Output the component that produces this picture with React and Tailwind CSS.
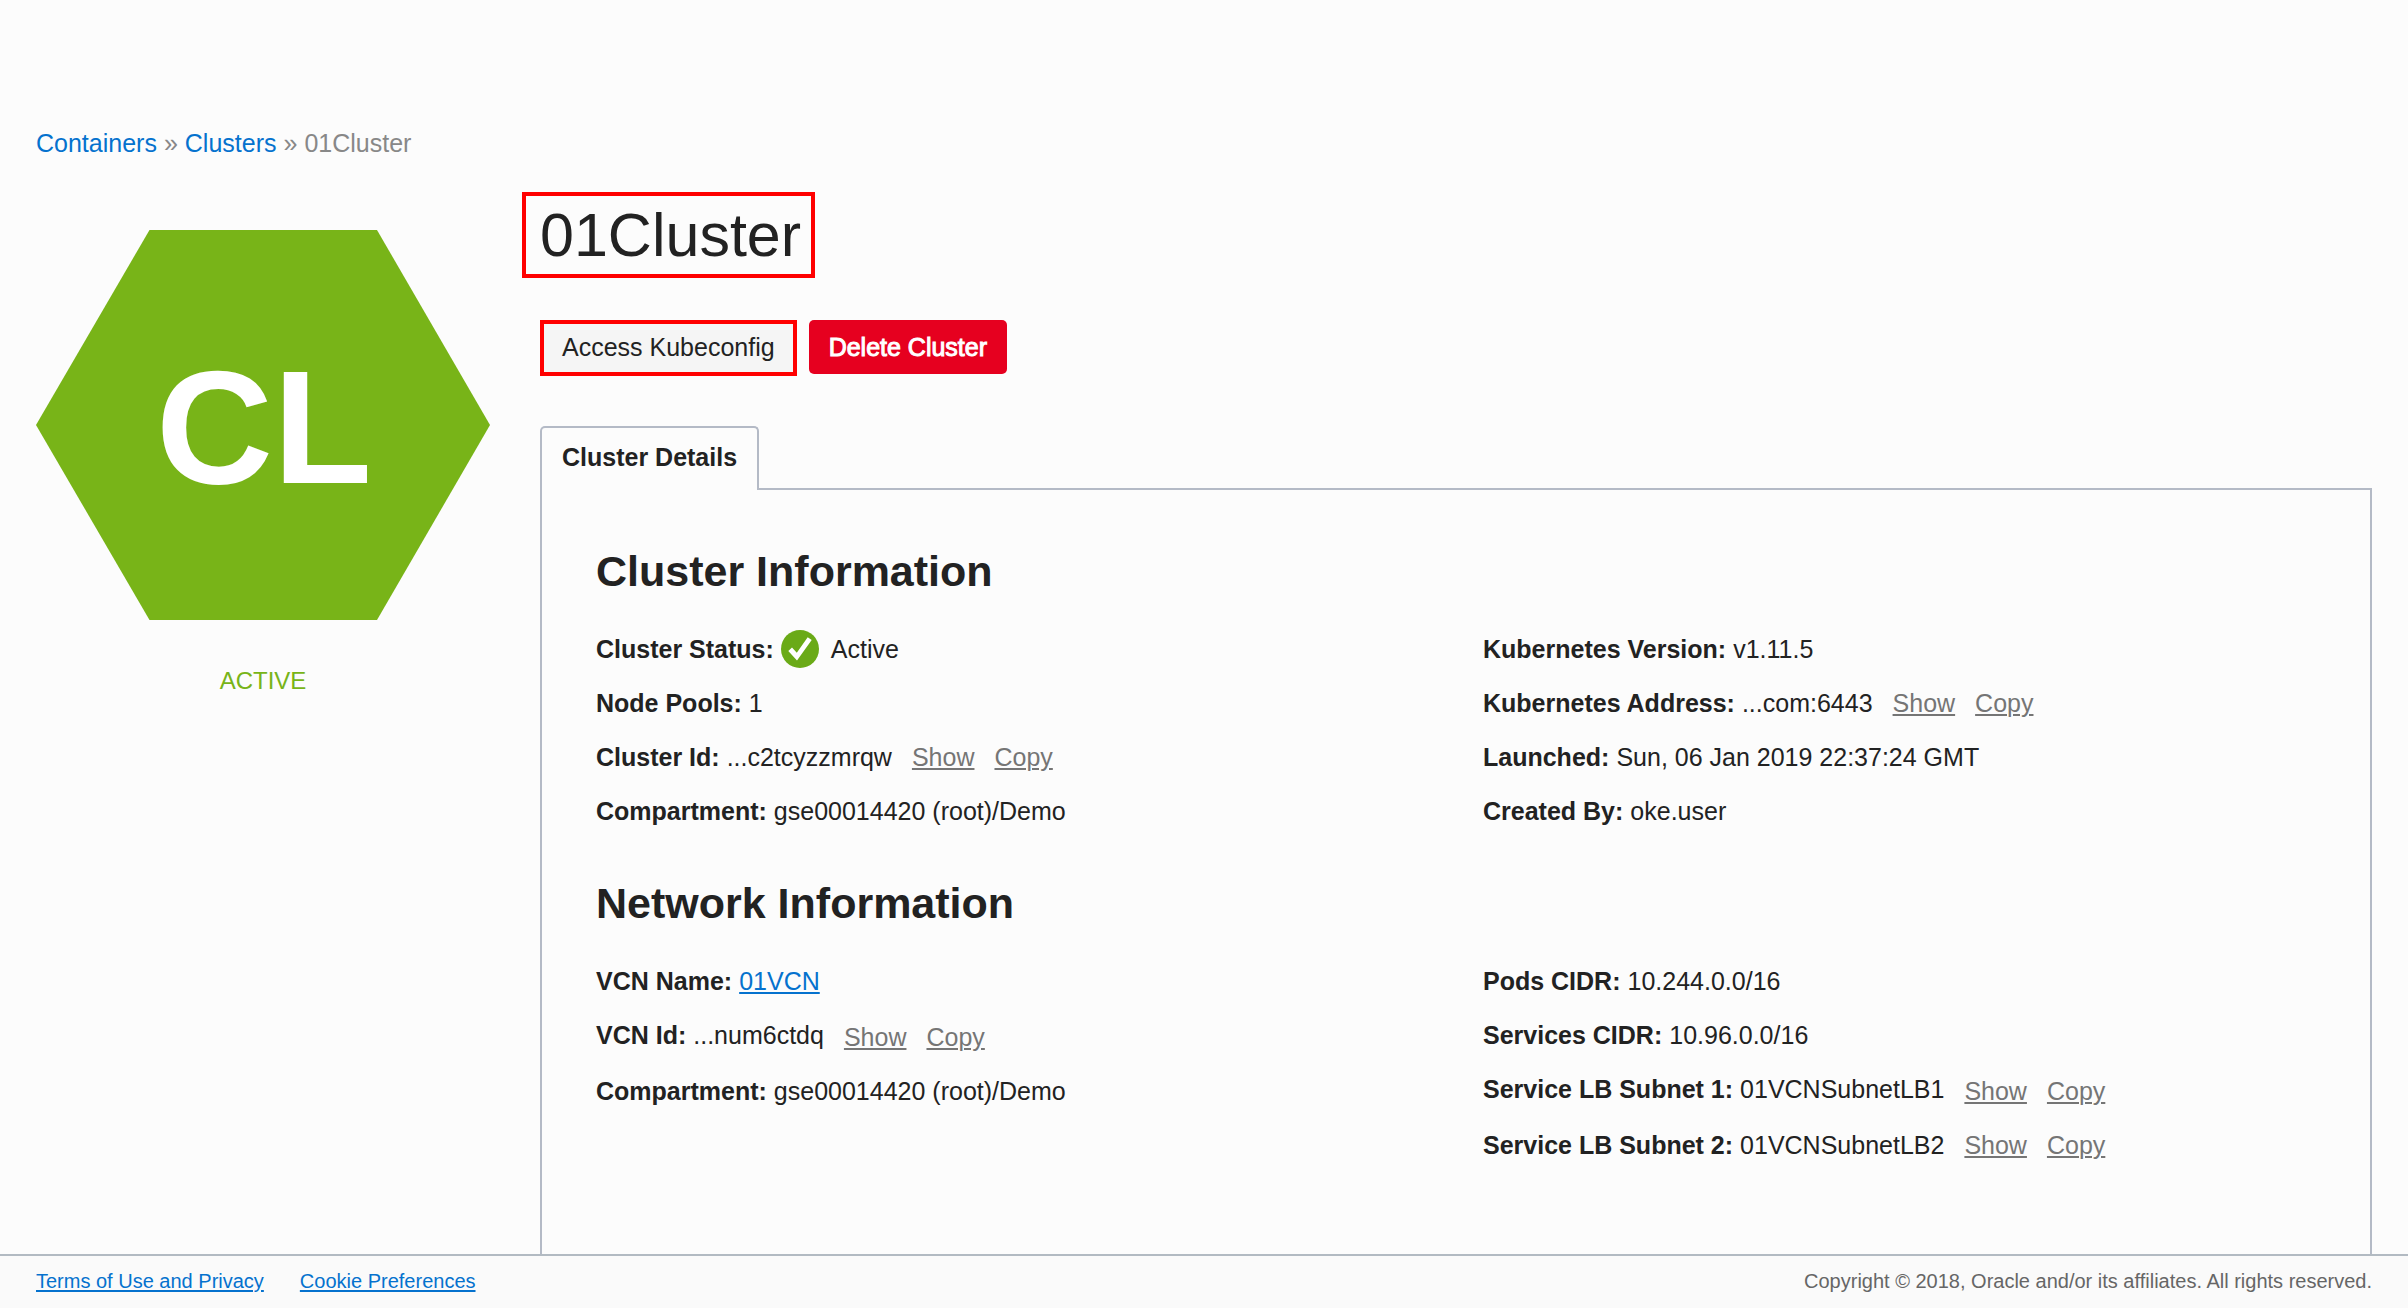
import React from "react";

const clusterLeft = [
  { label: "Cluster Status", value: "Active", status: true },
  { label: "Node Pools", value: "1" },
  { label: "Cluster Id", value: "...c2tcyzzmrqw", actions: true },
  { label: "Compartment", value: "gse00014420 (root)/Demo" },
];

const clusterRight = [
  { label: "Kubernetes Version", value: "v1.11.5" },
  { label: "Kubernetes Address", value: "...com:6443", actions: true },
  { label: "Launched", value: "Sun, 06 Jan 2019 22:37:24 GMT" },
  { label: "Created By", value: "oke.user" },
];

const networkLeft = [
  { label: "VCN Name", value: "01VCN", link: true },
  { label: "VCN Id", value: "...num6ctdq", actions: true, tall: true },
  { label: "Compartment", value: "gse00014420 (root)/Demo" },
];

const networkRight = [
  { label: "Pods CIDR", value: "10.244.0.0/16" },
  { label: "Services CIDR", value: "10.96.0.0/16" },
  { label: "Service LB Subnet 1", value: "01VCNSubnetLB1", actions: true, tall: true },
  { label: "Service LB Subnet 2", value: "01VCNSubnetLB2", actions: true },
];

function CheckIcon() {
  return (
    <svg viewBox="0 0 38 38" className="mr-[5px] size-[38px] shrink-0" aria-hidden="true">
      <circle cx="19" cy="19" r="19" fill="#6aaa17" />
      <polygon points="7.3,21 11,17.5 15.8,22.8 26.7,7.3 30.7,10 16,30.5" fill="#fff" />
    </svg>
  );
}

function Field({ label, value, status, link, actions, tall }) {
  return (
    <div className={tall ? "flex h-14 leading-[54px]" : "flex leading-[54px]"}>
      <dt className="mr-[7px] font-bold">{label}:</dt>
      <dd className="flex">
        {status ? (
          <span className="flex items-center gap-[7px]">
            <CheckIcon />
            {value}
          </span>
        ) : link ? (
          <a href="#vcn" className="text-[#0572ce] underline decoration-2 underline-offset-2">{value}</a>
        ) : (
          <span>{value}</span>
        )}
        {actions && (
          <span className="ml-5 flex gap-5 self-end text-[#757575]">
            <a href="#show" className="underline decoration-2 underline-offset-2">Show</a>
            <a href="#copy" className="underline decoration-2 underline-offset-2">Copy</a>
          </span>
        )}
      </dd>
    </div>
  );
}

function Section({ title, left, right }) {
  return (
    <section>
      <h2 className="mb-6 text-[43px] leading-[54px] font-bold">{title}</h2>
      <div className="grid grid-cols-2 gap-[54px]">
        <dl>{left.map((f) => <Field key={f.label} {...f} />)}</dl>
        <dl>{right.map((f) => <Field key={f.label} {...f} />)}</dl>
      </div>
    </section>
  );
}

export default function App() {
  return (
    <div className="flex min-h-screen flex-col bg-[#fcfcfc] font-['Liberation_Sans',Arial,sans-serif] text-[25px] text-[#222]">
      <nav aria-label="Breadcrumb" className="mt-[127px] flex gap-[7px] px-9 leading-8 text-[#888]">
        <a href="#containers" className="text-[#0572ce]">Containers</a>
        <span>»</span>
        <a href="#clusters" className="text-[#0572ce]">Clusters</a>
        <span>»</span>
        <span>01Cluster</span>
      </nav>

      <main className="mt-[33px] flex flex-1 gap-[50px] px-9">
        <aside className="mt-[38px] w-[454px] shrink-0">
          <svg viewBox="0 0 454 390" className="block w-full">
            <polygon points="0,195 113.5,0 341,0 454,195 341,390 113.5,390" fill="#78b418" />
            <text x="228" y="253" textAnchor="middle" className="fill-white text-[162px] font-bold">CL</text>
          </svg>
          <p className="mt-[45px] text-center text-2xl leading-8 text-[#78b418]">ACTIVE</p>
        </aside>

        <div className="flex min-w-0 flex-1 flex-col">
          <h1 className="-ml-[18px] w-fit border-4 border-[#ff0000] pr-2.5 pl-3.5 text-[61px] leading-[78px]">01Cluster</h1>

          <div className="mt-[42px] flex items-start gap-3">
            <button className="border-4 border-[#ff0000] bg-[#f5f5f5] px-[18px] pb-0.5 leading-[46px]">Access Kubeconfig</button>
            <button className="rounded-[5px] bg-[#e6001f] px-5 leading-[54px] text-white [-webkit-text-stroke:1px_white]">Delete Cluster</button>
          </div>

          <div role="tablist" className="relative mt-[50px] -mb-0.5 flex">
            <button role="tab" aria-selected="true" className="rounded-t-[5px] border-2 border-b-0 border-[#b4bac6] bg-[#fcfcfc] px-5 pb-1 leading-[58px] font-bold">Cluster Details</button>
          </div>
          <div role="tabpanel" className="flex flex-1 flex-col gap-[38px] border-2 border-b-0 border-[#b4bac6] px-[54px] pt-[54px] pb-10">
            <Section title="Cluster Information" left={clusterLeft} right={clusterRight} />
            <Section title="Network Information" left={networkLeft} right={networkRight} />
          </div>
        </div>
      </main>

      <footer className="flex justify-between border-t-2 border-[#b2bac2] bg-[#fafafa] px-9 pb-0.5 text-xl leading-[50px]">
        <div className="flex gap-9 text-[#0572ce]">
          <a href="#terms" className="underline decoration-2 underline-offset-2">Terms of Use and Privacy</a>
          <a href="#cookies" className="underline decoration-2 underline-offset-2">Cookie Preferences</a>
        </div>
        <p className="text-[#666]">Copyright © 2018, Oracle and/or its affiliates. All rights reserved.</p>
      </footer>
    </div>
  );
}
